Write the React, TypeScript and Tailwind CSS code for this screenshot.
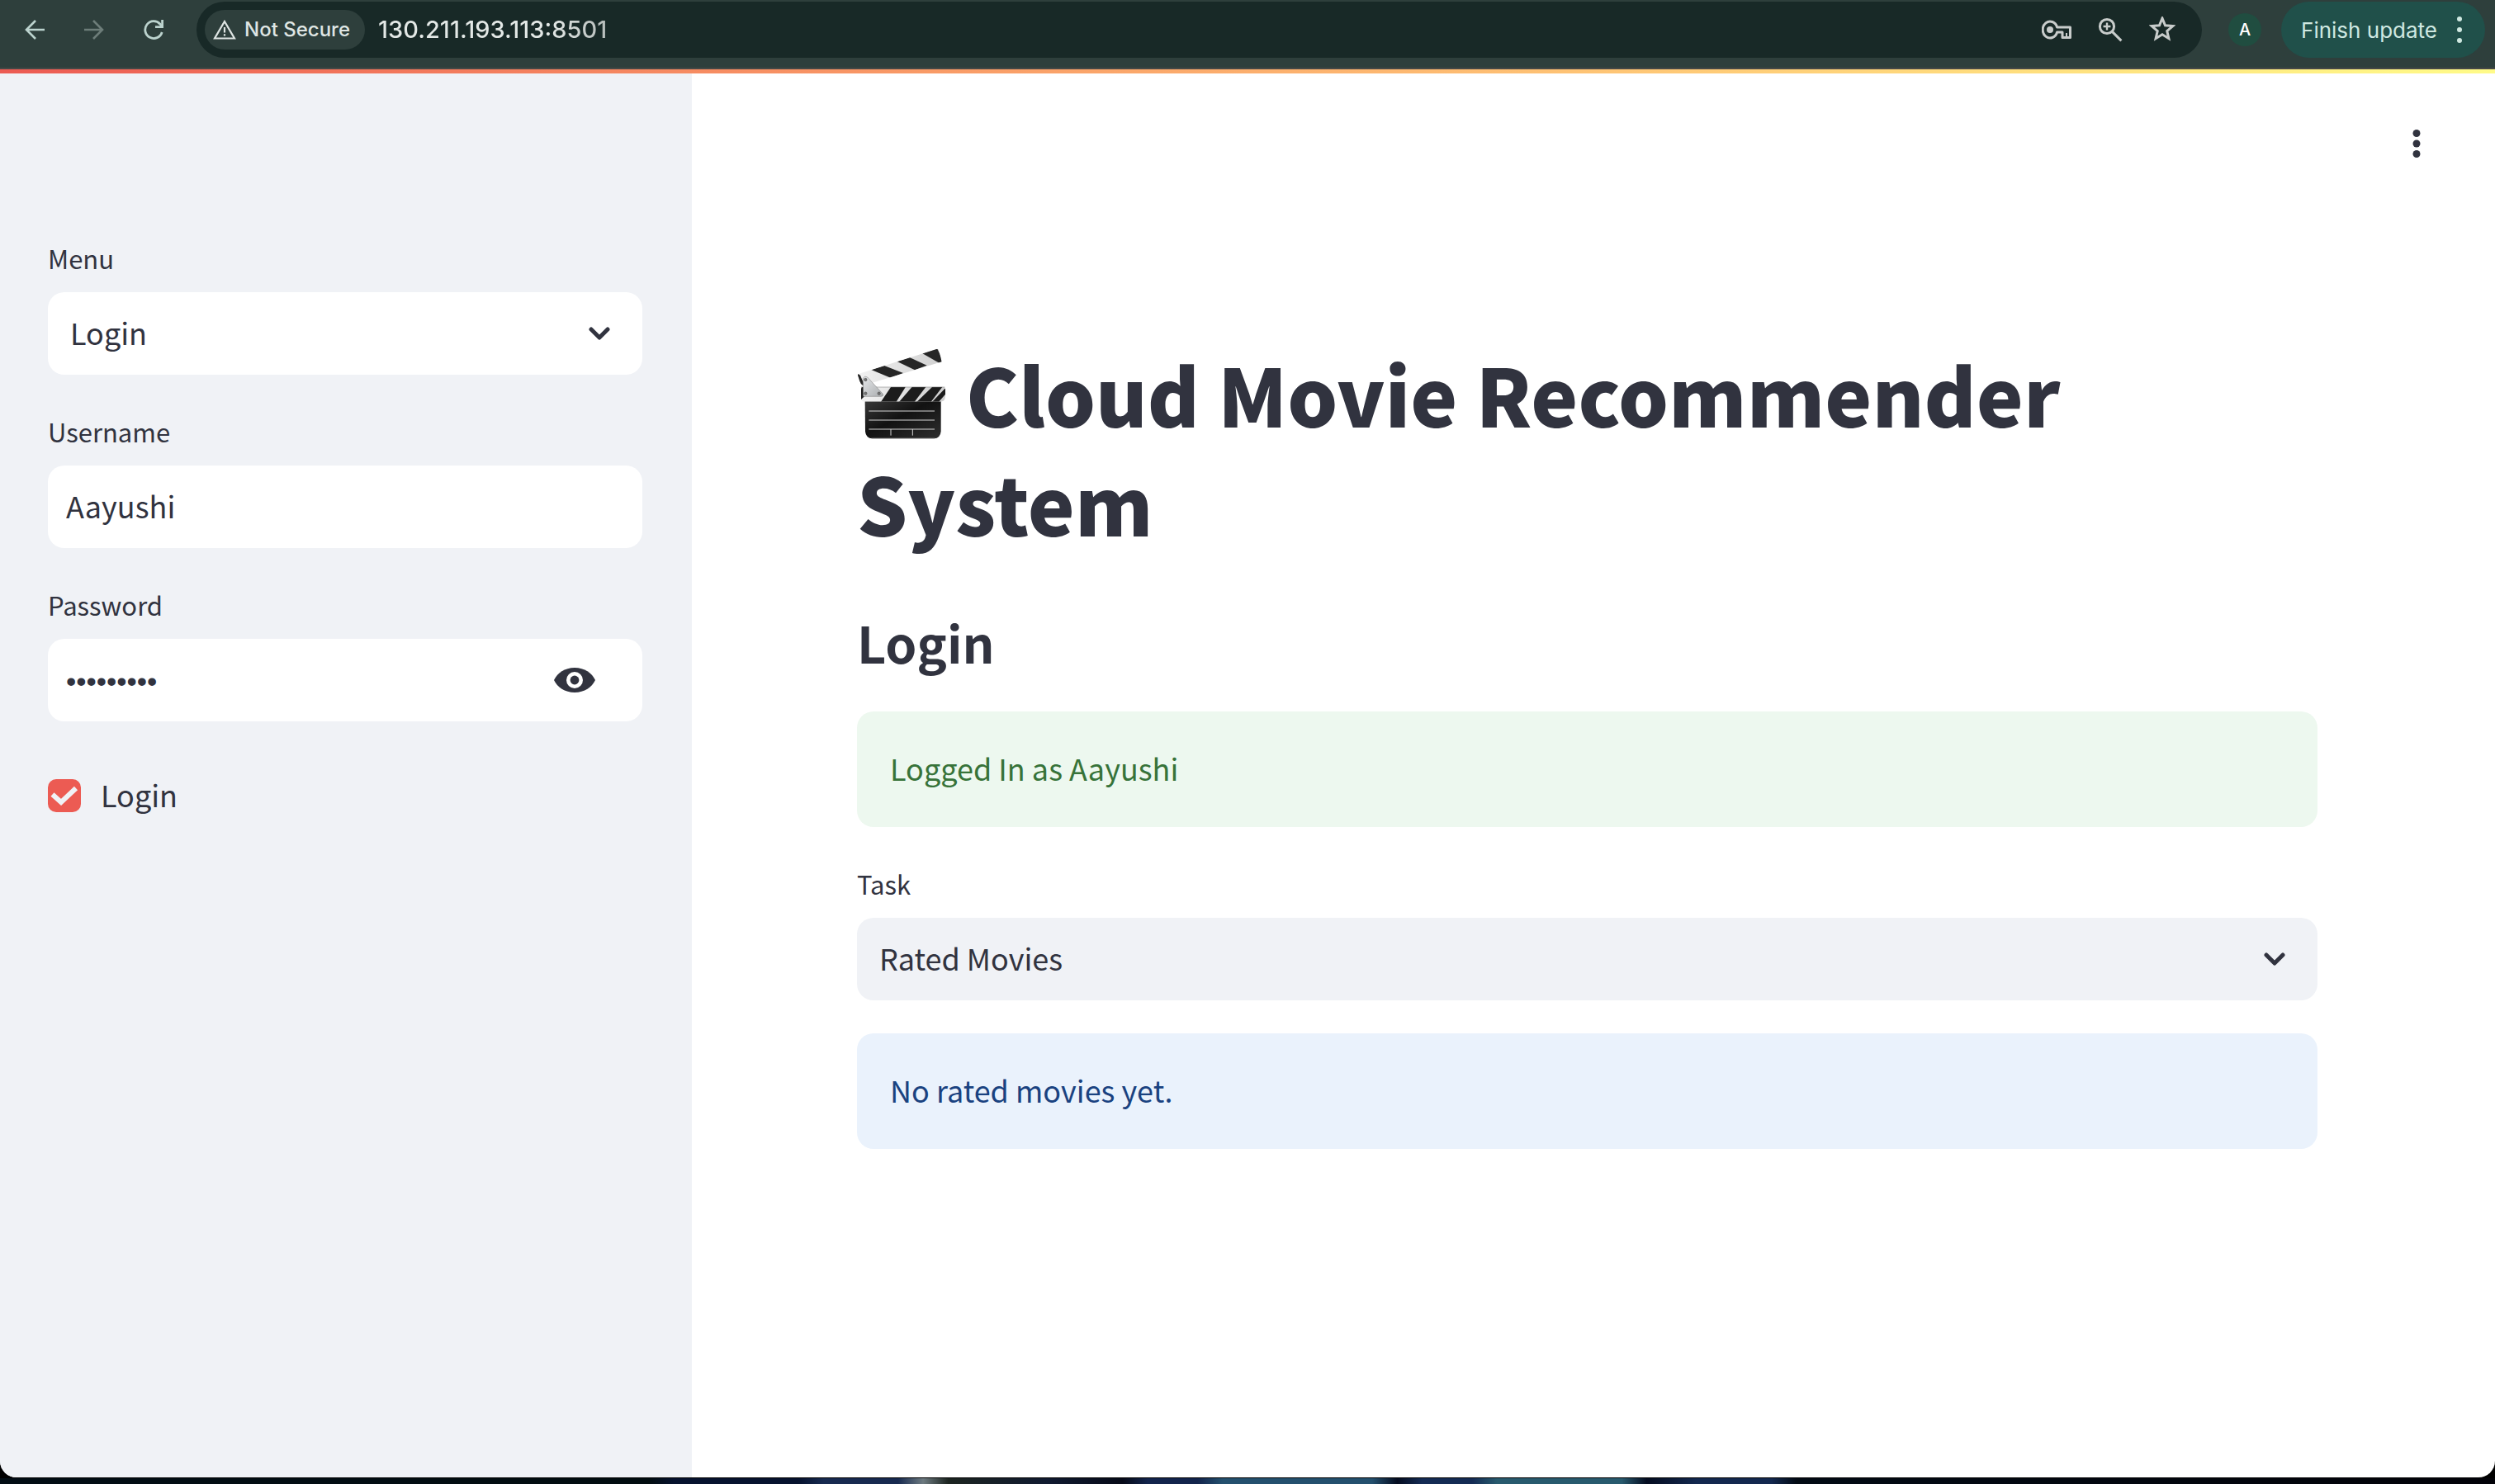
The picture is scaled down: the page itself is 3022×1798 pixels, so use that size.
import { useState, type ReactNode } from "react";

const BODY_FONT = "font-['Noto_Sans_CJK_SC','Noto_Sans',sans-serif]";
const CHROME_FONT = "font-['Inter','Liberation_Sans',sans-serif]";

function ClapperBoard() {
  return (
    <svg
      viewBox="54 70 324 330"
      className="mr-[2px] inline-block h-[110px] w-[108px] align-[-14px]"
      role="img"
      aria-label="Clapper board"
    >
      <defs>
        <linearGradient id="slate" x1="0" y1="0" x2="1" y2="1">
          <stop offset="0" stopColor="#3a3a3a" />
          <stop offset="0.45" stopColor="#121212" />
          <stop offset="1" stopColor="#2e2e2e" />
        </linearGradient>
        <linearGradient id="hinge" x1="0" y1="0" x2="1" y2="1">
          <stop offset="0" stopColor="#e6e8ea" />
          <stop offset="1" stopColor="#a9acae" />
        </linearGradient>
        <linearGradient id="white" x1="0" y1="0" x2="1" y2="0">
          <stop offset="0" stopColor="#f2f2f2" />
          <stop offset="1" stopColor="#cfcfcf" />
        </linearGradient>
        <clipPath id="arm">
          <path d="M60 163 L343 73 Q350 71 352 78 L362 119 L76 206 Q68 202 64 190 L57 168 Q56 164 60 163Z" />
        </clipPath>
        <clipPath id="bar">
          <path d="M76 210 H367 Q375 210 375 218 V244 Q374 263 360 264 H76 Q69 262 69 254 V217 Q69 210 76 210Z" />
        </clipPath>
      </defs>
      <path
        d="M83 258 H359 V372 Q357 396 334 398 H110 Q86 396 84 372Z"
        fill="url(#slate)"
      />
      <path d="M106 397 H338" stroke="#8b8b8b" strokeWidth="2" />
      <g clipPath="url(#arm)">
        <rect x="54" y="70" width="324" height="140" fill="url(#white)" />
        <g fill="#262626">
          <path d="M54 160 L66 168 L84 210 L60 206Z" />
          <path d="M106 148 L153 133 L222 160 L176 177Z" />
          <path d="M200 118 L245 103 L308 132 L264 149Z" />
          <path d="M292 89 L345 70 L370 122 L354 124Z" />
        </g>
      </g>
      <g clipPath="url(#bar)">
        <rect x="66" y="208" width="312" height="58" fill="url(#white)" />
        <g fill="#1c1c1c">
          <path d="M66 208 H86 V240 L69 256Z" />
          <path d="M179 208 H232 L196 266 H140Z" />
          <path d="M256 208 H306 L262 266 H206Z" />
          <path d="M330 208 H366 L322 266 H270Z" />
          <path d="M378 212 V234 L350 266 H326Z" />
        </g>
      </g>
      <path d="M69 211 H373" stroke="#777" strokeWidth="1.5" />
      <path
        d="M76 178 Q83 168 92 175 L148 236 Q151 245 142 245 H77Z"
        fill="url(#hinge)"
        stroke="#777"
        strokeWidth="1.5"
      />
      <g fill="#777" stroke="#4a4a4a" strokeWidth="2">
        <circle cx="85" cy="184" r="5" />
        <circle cx="85" cy="234" r="5" />
        <circle cx="134" cy="234" r="5" />
      </g>
      <path
        d="M97 298 H336 M97 331 H336 M97 364 H336 M177 364 V387 M256 364 V387"
        stroke="#d6d6d6"
        strokeWidth="3"
        fill="none"
      />
    </svg>
  );
}

function Chevron() {
  return (
    <svg
      viewBox="0 0 26 16"
      className="pointer-events-none absolute right-[39px] h-4 w-[26px]"
      fill="none"
      stroke="#31333f"
      strokeWidth="5"
      strokeLinecap="round"
      strokeLinejoin="round"
    >
      <path d="M3 3 L13 13 L23 3" />
    </svg>
  );
}

function Label({ htmlFor, children }: { htmlFor: string; children: ReactNode }) {
  return (
    <label htmlFor={htmlFor} className="mb-[10px] flex h-[60px] items-center pb-[2px] text-[31px] leading-[48px]">
      {children}
    </label>
  );
}

function SelectField({
  id,
  label,
  options,
  tone,
}: {
  id: string;
  label: string;
  options: string[];
  tone: string;
}) {
  return (
    <div>
      <Label htmlFor={id}>{label}</Label>
      <div className="relative flex items-center">
        <select
          id={id}
          className={`h-[100px] w-full appearance-none rounded-[20px] px-[27px] pb-1 text-[36px] outline-none ${tone}`}
        >
          {options.map((o) => (
            <option key={o}>{o}</option>
          ))}
        </select>
        <Chevron />
      </div>
    </div>
  );
}

function BrowserBar() {
  return (
    <header
      className={`flex h-[84px] items-start border-b-2 border-[#454846] bg-[#2e3f3c] pt-[2px] pr-3 ${CHROME_FONT}`}
    >
      <nav className="flex h-[68px] w-[238px] shrink-0 items-center gap-12 pl-[30px]">
        <button aria-label="Back" className="text-[#bcd3ce]">
          <svg viewBox="0 0 24 24" className="size-6" fill="none" stroke="currentColor" strokeWidth="2.6">
            <path d="M24 12 H2 M13 1 L2 12 L13 23" />
          </svg>
        </button>
        <button aria-label="Forward" className="text-[#6d7d79]">
          <svg viewBox="0 0 24 24" className="size-6" fill="none" stroke="currentColor" strokeWidth="2.6">
            <path d="M0 12 H22 M11 1 L22 12 L11 23" />
          </svg>
        </button>
        <button aria-label="Reload" className="text-[#bcd3ce]">
          <svg viewBox="0 0 24 24" className="size-6" fill="none" stroke="currentColor" strokeWidth="2.8">
            <path d="M22.2 15 A10.4 10.4 0 1 1 20 5.2 L22 8" />
            <path d="M22.6 0 V8.6 H14" />
          </svg>
        </button>
      </nav>
      <div className="flex h-[68px] flex-1 items-center rounded-full bg-[#182927] pr-8 pl-[10px]">
        <button className="flex h-12 items-center gap-[10px] rounded-full bg-[#2e3f3c] pr-[18px] pl-[10px] text-[24px] font-medium text-[#dfe5e3]">
          <svg viewBox="0 0 28 24" className="h-6 w-7" fill="none" stroke="currentColor" strokeWidth="2.2">
            <path d="M14 2 L26 22.5 H2Z" />
            <path d="M14 9 V15.5 M14 17.2 V19.6" />
          </svg>
          Not Secure
        </button>
        <input
          aria-label="Address"
          defaultValue="130.211.193.113:8501"
          className="ml-4 min-w-0 flex-1 bg-linear-to-r from-[#e3e8e6] from-[210px] to-[#b3bab8] to-[280px] bg-clip-text text-[29px] font-medium text-transparent outline-none"
        />
        <div className="flex items-center gap-8 text-[#c8cccb]">
          <button aria-label="Saved passwords">
            <svg viewBox="0 0 36 24" className="h-6 w-9" fill="none" stroke="currentColor" strokeWidth="3">
              <path d="M18.6 9 A8.9 10 0 1 0 18.6 15 H25 V21.5 H34.5 V9Z" strokeLinejoin="round" />
              <circle cx="10" cy="12" r="4" fill="currentColor" stroke="none" />
              <path d="M30 16 V21" strokeWidth="2" />
            </svg>
          </button>
          <button aria-label="Zoom">
            <svg viewBox="0 0 30 30" className="size-[30px]" fill="none" stroke="currentColor" strokeWidth="3">
              <circle cx="11" cy="11" r="8.6" />
              <path d="M17.4 17.4 L28.4 28.4" />
              <path d="M11 6.6 V15.4 M6.6 11 H15.4" strokeWidth="2.4" />
            </svg>
          </button>
          <button aria-label="Bookmark">
            <svg viewBox="1 2 30 30" className="size-8" fill="none" stroke="currentColor" strokeWidth="2.8">
              <path d="M16 4 L19.3 12.1 L28 12.8 L21.4 18.4 L23.4 27 L16 22.4 L8.6 27 L10.6 18.4 L4 12.8 L12.7 12.1Z" />
            </svg>
          </button>
        </div>
      </div>
      <div className="ml-8 flex h-[68px] items-center gap-6">
        <button className="flex size-10 items-center justify-center rounded-full bg-[#204d40] text-[20px] font-medium text-white">
          A
        </button>
        <button className="flex h-[68px] items-center gap-6 rounded-full bg-[#20504a] pr-7 pl-6 text-[26px] text-[#cfe8e1]">
          Finish update
          <svg viewBox="0 0 6 34" className="h-[34px] w-[6px]" fill="currentColor">
            <circle cx="3" cy="4" r="3" />
            <circle cx="3" cy="17" r="3" />
            <circle cx="3" cy="30" r="3" />
          </svg>
        </button>
      </div>
    </header>
  );
}

function Sidebar() {
  const [visible, setVisible] = useState(false);
  return (
    <aside className="flex w-[838px] shrink-0 flex-col gap-10 bg-[#f0f2f6] pt-[195px] pr-[60px] pl-[58px]">
      <SelectField id="menu" label="Menu" options={["Login", "Home", "SignUp"]} tone="bg-white" />
      <div>
        <Label htmlFor="username">Username</Label>
        <input
          id="username"
          defaultValue="Aayushi"
          className="h-[100px] w-full rounded-[20px] bg-white px-[22px] pb-1 text-[36px] outline-none"
        />
      </div>
      <div>
        <Label htmlFor="password">Password</Label>
        <div className="flex h-[100px] items-center rounded-[20px] bg-white pr-[57px] pl-[22px]">
          <input
            id="password"
            type={visible ? "text" : "password"}
            defaultValue="moviefan1"
            className="min-w-0 flex-1 bg-transparent pt-1 font-['Liberation_Sans',sans-serif] text-[35px] outline-none"
          />
          <button aria-label="Show password" onClick={() => setVisible(!visible)}>
            <svg viewBox="0 0 50 30" className="h-[30px] w-[50px]">
              <path d="M25 0 C13 0 4 6.500 0 15 C4 23.500 13 30 25 30 C37 30 46 23.500 50 15 C46 6.500 37 0 25 0Z" fill="#31333f" />
              <circle cx="25" cy="15" r="10" fill="#fff" />
              <circle cx="25" cy="15" r="5.400" fill="#31333f" />
            </svg>
          </button>
        </div>
      </div>
      <div className="flex h-[100px] items-center gap-6 text-[36px]">
        <span className="relative flex size-10">
          <input
            id="login"
            type="checkbox"
            defaultChecked
            className="peer size-10 appearance-none rounded-[10px] bg-[#d5d6dd] checked:bg-[#ec5b53]"
          />
          <svg
            viewBox="0 0 40 40"
            className="pointer-events-none absolute inset-0 hidden size-10 peer-checked:block"
            fill="none"
            stroke="#f0f2f6"
            strokeWidth="6"
          >
            <path d="M5.500 18.500 L16 28 L34 11" />
          </svg>
        </span>
        <label htmlFor="login" className="pb-1">
          Login
        </label>
      </div>
    </aside>
  );
}

export default function App() {
  return (
    <div className="flex min-h-screen flex-col bg-black">
      <BrowserBar />
      <div className="flex flex-1 flex-col overflow-hidden rounded-b-[20px] bg-white">
        <div className="h-[5px] bg-linear-to-r from-[#ec5b53] to-[#fffb88]" />
        <div className={`flex flex-1 text-[#31333f] ${BODY_FONT}`}>
          <Sidebar />
          <main className="relative flex-1 pt-[322px] pr-[215px] pl-[200px]">
            <button aria-label="Main menu" className="absolute top-[68px] right-[90px]">
              <svg viewBox="0 0 10 34" className="h-[34px] w-[10px]" fill="#31333f">
                <circle cx="5" cy="4.500" r="4.500" />
                <circle cx="5" cy="17" r="4.500" />
                <circle cx="5" cy="29.500" r="4.500" />
              </svg>
            </button>
            <h1 className="text-[96px] leading-[132px] font-black">
              <ClapperBoard /> Cloud Movie Recommender System
            </h1>
            <h2 className="mt-[61px] text-[61px] leading-[84px] font-semibold">Login</h2>
            <div className="mt-[42px] flex flex-col gap-10">
              <p
                role="status"
                className="flex h-[140px] items-center rounded-[20px] bg-[#edf8ef] px-10 pb-1 text-[36px] text-[#377339]"
              >
                Logged In as Aayushi
              </p>
              <SelectField
                id="task"
                label="Task"
                options={["Rated Movies", "Recommendations"]}
                tone="bg-[#f0f2f6]"
              />
              <p
                role="status"
                className="flex h-[140px] items-center rounded-[20px] bg-[#eaf2fc] px-10 pb-1 text-[36px] text-[#1a4280]"
              >
                No rated movies yet.
              </p>
            </div>
          </main>
        </div>
      </div>
      <div className="h-2 border-t border-black bg-[linear-gradient(90deg,#020d14_0%,#020d10_26%,#06122e_27%,#06122e_32%,#172a50_33%,#172a50_36%,#6d7a80_37%,#1c2420_38%,#101a30_42%,#060a18_45%,#12244c_46%,#12244c_48%,#24506e_49%,#24506e_55%,#040c20_56%,#142b54_57%,#142b54_59%,#285a6e_60%,#285a6e_65%,#040c20_66%,#13284f_68%,#13284f_71%,#020a14_72%,#020208_100%)]" />
    </div>
  );
}
